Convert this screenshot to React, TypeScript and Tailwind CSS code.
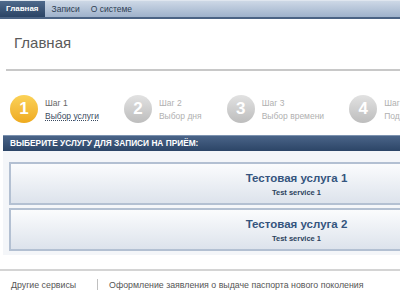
const font = { fontFamily: '"Liberation Sans", Arial, sans-serif' };

const steps = [
  { n: 1, title: "Шаг 1", label: "Выбор услуги", active: true },
  { n: 2, title: "Шаг 2", label: "Выбор дня", active: false },
  { n: 3, title: "Шаг 3", label: "Выбор времени", active: false },
  { n: 4, title: "Шаг 4", label: "Подтверждение", active: false },
];

const services = [
  { name: "Тестовая услуга 1", sub: "Test service 1" },
  { name: "Тестовая услуга 2", sub: "Test service 1" },
];

export default function App() {
  return (
    <div className="h-[290px] w-full overflow-hidden bg-white" style={font}>
      <div className="w-[590px]">
        {/* top menu */}
        <div className="flex h-[19px] border-t border-t-[#dfe6ef] border-b-2 border-b-[#4b6384] bg-gradient-to-b from-[#cdd8e6] to-[#9fb2cb] text-[8px]">
          <div className="flex items-center bg-gradient-to-b from-[#4f6a8c] to-[#2b4465] px-[6px] font-bold text-white">
            Главная
          </div>
          <div className="flex items-center pl-[7px] pr-[9px] text-[8.5px] text-[#2f3f55]">Записи</div>
          <div className="flex items-center px-[2px] text-[8.5px] text-[#2f3f55]">О системе</div>
        </div>

        <div className="px-[14px] pt-[15px] text-[15px] leading-[18px] text-[#5a5a5a]">Главная</div>

        <div className="ml-[6px] mt-[17px] h-[2px] bg-[#c8c8c8]" />

        {/* steps */}
        <div className="ml-[10px] mt-[24px] flex">
          {steps.map((s) => (
            <div key={s.n} className="mr-[25px] flex shrink-0 items-center">
              <div
                className={
                  s.active
                    ? "flex h-[28px] w-[28px] items-center justify-center rounded-full bg-gradient-to-b from-[#fbd257] to-[#eeaa1c] text-[17px] font-bold text-white"
                    : "flex h-[28px] w-[28px] items-center justify-center rounded-full bg-gradient-to-b from-[#e2e2e2] to-[#bdbdbd] text-[17px] font-bold text-white"
                }
              >
                {s.n}
              </div>
              <div className="ml-[7px] flex flex-col text-[8.5px] leading-[10px]">
                <span className={s.active ? "text-[#666]" : "text-[#b0b0b0]"}>{s.title}</span>
                <span
                  className={
                    s.active
                      ? "mt-[3px] text-[#3a4a60] underline decoration-dotted"
                      : "mt-[3px] text-[#b0b0b0]"
                  }
                >
                  {s.label}
                </span>
              </div>
            </div>
          ))}
        </div>

        {/* services panel */}
        <div className="ml-[3px] mt-[12px]">
          <div className="flex h-[16px] items-center border-t border-t-[#7d93b0] bg-gradient-to-b from-[#4a6488] to-[#2c4567] px-[7px] text-[8.3px] font-bold text-white">
            ВЫБЕРИТЕ УСЛУГУ ДЛЯ ЗАПИСИ НА ПРИЁМ:
          </div>
          <div className="flex flex-col gap-[3px] bg-[#f4f6f9] px-[6px] pb-[4px] pt-[11px]">
            {services.map((s) => (
              <div
                key={s.name}
                className="flex h-[43px] flex-col items-center justify-center border-2 border-[#b3c0d2] bg-gradient-to-b from-[#fbfcfd] to-[#dde3ec]"
              >
                <div className="text-[11.5px] font-bold leading-[14px] text-[#35557e]">{s.name}</div>
                <div className="mt-[3px] text-[7.5px] font-bold leading-[9px] text-[#2b3f5c]">{s.sub}</div>
              </div>
            ))}
          </div>
        </div>

        {/* footer */}
        <div className="mt-[14px] h-[2px] bg-[#d4d4d4]" />
        <div className="flex items-center pt-[8px] text-[8.8px] text-[#555]">
          <span className="pl-[11px] pr-[21px]">Другие сервисы</span>
          <span className="h-[14px] w-px bg-[#c0c0c0]" />
          <span className="pl-[11px]">Оформление заявления о выдаче паспорта нового поколения</span>
        </div>
      </div>
    </div>
  );
}
